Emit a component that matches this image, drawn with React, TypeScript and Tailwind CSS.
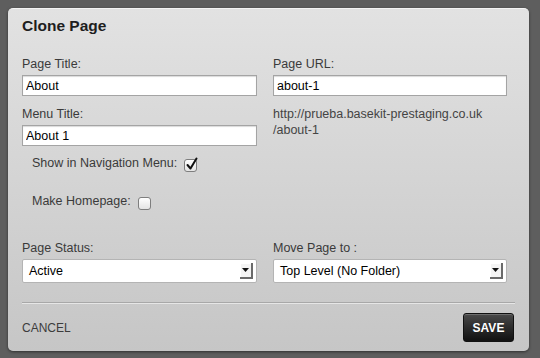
import React from 'react';

function Field({ label, value }: { label: string; value: string }) {
    return (
        <div className="flex flex-col">
            <label className="text-[12.5px] leading-[16px] text-[#3a3a3a]">{label}</label>
            <input
                readOnly
                value={value}
                className="mt-[3px] h-[21px] w-full border border-[#a4a4a4] bg-white px-[3px] text-[12.5px] text-black shadow-[inset_0_1px_1px_rgba(0,0,0,0.15)] outline-none"
            />
        </div>
    );
}

function Select({ label, value }: { label: string; value: string }) {
    return (
        <div className="flex flex-col">
            <label className="text-[12.5px] leading-[16px] text-[#3a3a3a]">{label}</label>
            <div className="mt-[3px] flex h-[24px] w-full items-center justify-between rounded-[2px] border border-[#b4b4b4] bg-white pl-[6px] pr-[3px]">
                <span className="text-[12.5px] text-black">{value}</span>
                <span className="flex h-[16px] w-[13px] items-center justify-center border-b-2 border-r-2 border-[#6a6a6a] bg-[#f4f4f4] shadow-[inset_1px_1px_0_#ffffff]">
                    <svg width="7" height="4" viewBox="0 0 7 4">
                        <path d="M0 0 L7 0 L3.5 4 Z" fill="#111" />
                    </svg>
                </span>
            </div>
        </div>
    );
}

function Checkbox({ checked }: { checked?: boolean }) {
    return (
        <span className="relative ml-[7px] mt-[4px] block h-[13px] w-[13px] shrink-0 rounded-[3px] border border-[#7e7e7e] bg-gradient-to-b from-white to-[#e4e4e4]">
            {checked && (
                <svg className="absolute -top-[3px] left-[1px]" width="12" height="14" viewBox="0 0 12 14">
                    <path d="M1.5 8 L4.5 11.5 L10.5 1.5" fill="none" stroke="#111" strokeWidth="2" strokeLinecap="round" strokeLinejoin="round" />
                </svg>
            )}
        </span>
    );
}

export default function App() {
    return (
        <div className="h-[358px] w-[540px] overflow-hidden bg-[#5e5e5e] pl-[8px] pt-[8px] font-['Liberation_Sans',Arial,sans-serif]">
            <div className="h-[343px] w-[521px] rounded-[5px] border-t border-[#f4f4f4] bg-gradient-to-b from-[#e2e2e2] to-[#c6c6c6] px-[14px] pt-[7px] shadow-[0_1px_3px_rgba(0,0,0,0.5)]">
                <h1 className="text-[15.5px] font-bold leading-[20px] text-[#1e1e1e]">Clone Page</h1>

                <div className="mt-[20px] grid grid-cols-[235px_234px] gap-x-[16px]">
                    <div className="flex flex-col">
                        <Field label="Page Title:" value="About" />
                        <div className="mt-[10px]">
                            <Field label="Menu Title:" value="About 1" />
                        </div>
                        <div className="mt-[9px] flex h-[17px] items-start pl-[10px]">
                            <span className="text-[12.5px] leading-[16px] text-[#3a3a3a]">Show in Navigation Menu:</span>
                            <Checkbox checked />
                        </div>
                        <div className="mt-[21px] flex h-[17px] items-start pl-[10px]">
                            <span className="text-[12.5px] leading-[16px] text-[#3a3a3a]">Make Homepage:</span>
                            <Checkbox />
                        </div>
                    </div>
                    <div className="flex flex-col">
                        <Field label="Page URL:" value="about-1" />
                        <p className="mt-[10px] text-[12.5px] leading-[16px] text-[#444]">
                            http://prueba.basekit-prestaging.co.uk
                            <br />
                            /about-1
                        </p>
                    </div>
                </div>

                <div className="mt-[30px] grid grid-cols-[235px_234px] gap-x-[16px]">
                    <Select label="Page Status:" value="Active" />
                    <Select label="Move Page to :" value="Top Level (No Folder)" />
                </div>

                <div className="mt-[19px] h-px w-full bg-[#a8a8a8] shadow-[0_1px_0_#e6e6e6]" />

                <div className="mt-[10px] flex items-center justify-between">
                    <button className="text-[12px] leading-[16px] text-[#3c3c3c]">CANCEL</button>
                    <button className="mr-[1px] h-[29px] w-[51px] rounded-[3px] border border-[#111] bg-gradient-to-b from-[#4a4a4a] to-[#111] text-[12px] font-bold text-white shadow-[inset_0_1px_0_rgba(255,255,255,0.2)]">
                        SAVE
                    </button>
                </div>
            </div>
        </div>
    );
}
